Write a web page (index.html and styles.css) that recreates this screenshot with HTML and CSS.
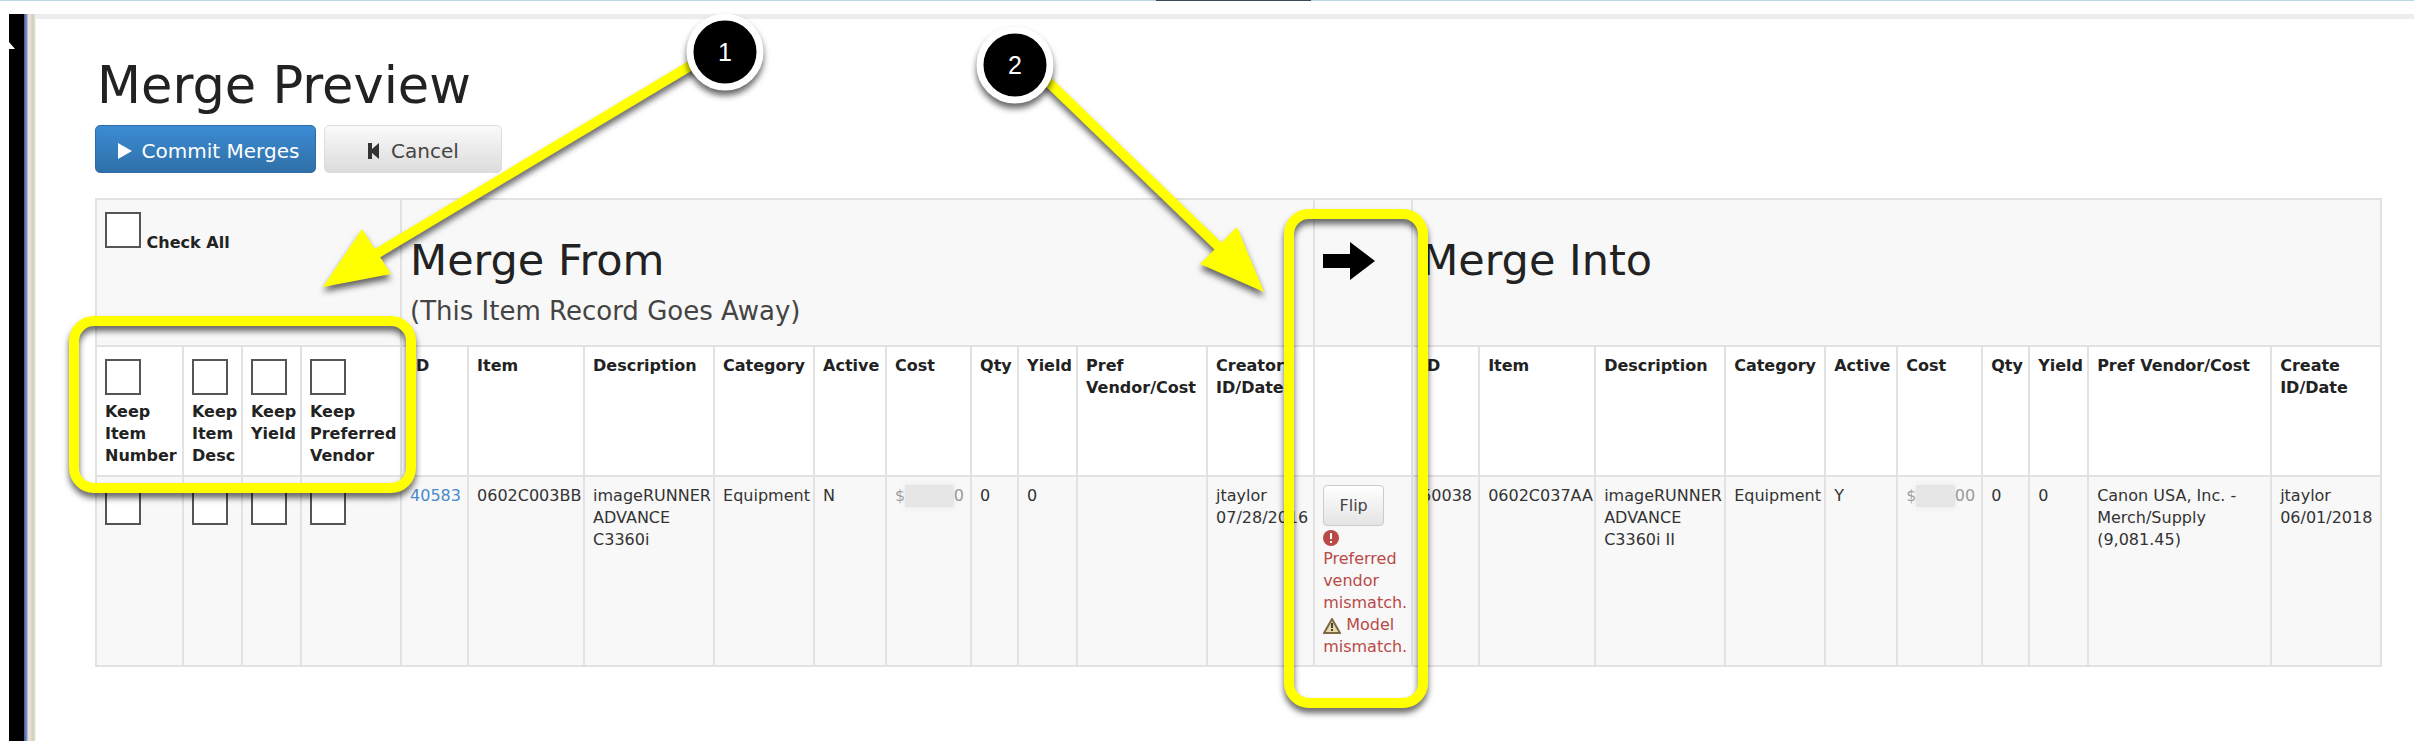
FILE: index.html
```
<!DOCTYPE html>
<html lang="en">
<head>
	<title>Merge Preview</title>
	<meta charset="UTF-8">
	<meta name="viewport" content="width=device-width, initial-scale=1.0">
	<link rel="stylesheet" href="styles.css">
</head>
<body>
	<div class="topbar"><span class="topbar-tab"></span></div>
	<div class="window">
		<div class="rail">
			<svg class="cursor" width="6" height="7" viewBox="0 0 6 7"><path d="M0 0 L6 7 H0 Z" fill="#fff"/></svg>
		</div>
		<div class="rail-edge"></div>
		<main class="content">
			<h1>Merge Preview</h1>
			<div class="actions">
				<button type="button" class="btn btn-primary">
					<svg width="14" height="16" viewBox="0 0 14 16"><path d="M0 0 L14 8 L0 16 Z" fill="#fff"/></svg>
					Commit Merges
				</button>
				<button type="button" class="btn btn-cancel">
					<svg width="14" height="16" viewBox="0 0 14 16"><path d="M1 0 H5 V6 L12 0 V16 L5 10 V16 H1 Z" fill="#333"/></svg>
					Cancel
				</button>
			</div>

			<table class="merge">
				<colgroup>
					<col class="c-number"><col class="c-small"><col class="c-small"><col class="c-cat">
					<col class="c-id"><col class="c-item"><col class="c-desc"><col class="c-cat"><col class="c-active"><col class="c-cost"><col class="c-qty"><col class="c-small"><col class="c-desc"><col class="c-creator">
					<col class="c-arrow">
					<col class="c-id"><col class="c-item"><col class="c-desc"><col class="c-cat"><col class="c-active"><col class="c-cost"><col class="c-qty"><col class="c-small"><col class="c-vendor"><col class="c-created">
				</colgroup>
				<thead>
					<tr class="groups">
						<th colspan="4"><input type="checkbox" id="all"> <label for="all">Check All</label></th>
						<th colspan="10">
							<h2>Merge From</h2>
							<p class="note">(This Item Record Goes Away)</p>
						</th>
						<th>
							<svg class="arrow" width="52" height="38" viewBox="0 0 52 38"><path d="M0 12 H27 V0 L52 19 L27 38 V26 H0 Z" fill="#000"/></svg>
						</th>
						<th colspan="10"><h2>Merge Into</h2></th>
					</tr>
					<tr class="heads">
						<th><input type="checkbox" id="keepNumber"><label for="keepNumber">Keep<br>Item<br>Number</label></th>
						<th><input type="checkbox" id="keepDesc"><label for="keepDesc">Keep<br>Item<br>Desc</label></th>
						<th><input type="checkbox" id="keepYield"><label for="keepYield">Keep<br>Yield</label></th>
						<th><input type="checkbox" id="keepVendor"><label for="keepVendor">Keep<br>Preferred<br>Vendor</label></th>
						<th>ID</th>
						<th>Item</th>
						<th>Description</th>
						<th>Category</th>
						<th>Active</th>
						<th>Cost</th>
						<th>Qty</th>
						<th>Yield</th>
						<th>Pref<br>Vendor/Cost</th>
						<th>Creator<br>ID/Date</th>
						<th></th>
						<th>ID</th>
						<th>Item</th>
						<th>Description</th>
						<th>Category</th>
						<th>Active</th>
						<th>Cost</th>
						<th>Qty</th>
						<th>Yield</th>
						<th>Pref Vendor/Cost</th>
						<th>Create<br>ID/Date</th>
					</tr>
				</thead>
				<tbody>
					<tr>
						<td><input type="checkbox" aria-label="Keep Item Number"></td>
						<td><input type="checkbox" aria-label="Keep Item Desc"></td>
						<td><input type="checkbox" aria-label="Keep Yield"></td>
						<td><input type="checkbox" aria-label="Keep Preferred Vendor"></td>
						<td><a href="#">40583</a></td>
						<td>0602C003BB</td>
						<td>imageRUNNER<br>ADVANCE<br>C3360i</td>
						<td>Equipment</td>
						<td>N</td>
						<td><div class="cost"><span>$</span><span class="hidden-price"></span><span>0</span></div></td>
						<td>0</td>
						<td>0</td>
						<td></td>
						<td>jtaylor<br>07/28/2016</td>
						<td class="problems">
							<button type="button" class="btn-flip">Flip</button>
							<div>
								<svg width="16" height="16" viewBox="0 0 16 16"><circle cx="8" cy="8" r="8" fill="#b94a48"/><path d="M7 3 H9 V9 H7 Z M7 11 H9 V13 H7 Z" fill="#fff"/></svg><br>
								Preferred<br>vendor<br>mismatch.<br>
								<svg width="18" height="16" viewBox="0 0 18 16"><path d="M9 1 L17 15 H1 Z" fill="#e8d9a8" stroke="#7d6a45" stroke-width="2"/><path d="M8 5 H10 V10 H8 Z M8 11 H10 V13 H8 Z" fill="#444"/></svg>
								Model<br>mismatch.
							</div>
						</td>
						<td>50038</td>
						<td>0602C037AA</td>
						<td>imageRUNNER<br>ADVANCE<br>C3360i II</td>
						<td>Equipment</td>
						<td>Y</td>
						<td><div class="cost"><span>$</span><span class="hidden-price"></span><span>00</span></div></td>
						<td>0</td>
						<td>0</td>
						<td>Canon USA, Inc. -<br>Merch/Supply<br>(9,081.45)</td>
						<td>jtaylor<br>06/01/2018</td>
					</tr>
				</tbody>
			</table>
		</main>
	</div>

	<!-- callouts drawn over the page -->
	<svg class="callouts" width="2414" height="752" viewBox="0 0 2414 752">
		<g class="marks">
			<rect x="74" y="321" width="337" height="167" rx="20"/>
			<rect x="1289" y="214" width="134" height="489" rx="20"/>
			<path d="M715 51 L376 254"/>
			<path d="M1040 74 L1220 248"/>
			<path class="head" d="M323 287 L362 229 L391 274 Z"/>
			<path class="head" d="M1264 292 L1237 227 L1200 264 Z"/>
		</g>
		<g class="badges">
			<circle cx="725" cy="52" r="35"/>
			<circle cx="1015" cy="65" r="35"/>
		</g>
		<text x="725" y="61">1</text>
		<text x="1015" y="74">2</text>
	</svg>
</body>
</html>
```
FILE: styles.css
```
* {
	box-sizing: border-box;
}

body {
	margin: 0;
	background-color: #fff;
	color: #333;
	font-family: "DejaVu Sans", Verdana, sans-serif;
	font-size: 16px;
	line-height: 22px;
}

.topbar {
	height: 1px;
	background-color: #b9d7e6;
	margin-bottom: 13px;
}

.topbar-tab {
	display: block;
	width: 155px;
	height: 1px;
	margin-left: 1156px;
	background-color: #3d4a54;
}

.window {
	display: flex;
	margin-left: 9px;
	min-height: 727px;
}

.rail {
	flex: none;
	width: 15px;
	background-color: #000;
}

.cursor {
	display: block;
	margin-top: 28px;
}

.rail-edge {
	flex: none;
	width: 12px;
	background: linear-gradient(to right, #44598c 0, #7d9bd0 3px, #ecdfd6 4px, #ecdfd6 6px, #d5d3bf 8px, #d5d3bf 10px, #eefffb 12px);
}

.content {
	flex: 1;
	min-width: 0;
	border-top: 5px solid #ededed;
	padding: 33px 32px 0 59px;
}

h1 {
	margin: 0 2px;
	font-size: 51px;
	line-height: 68px;
	font-weight: normal;
	color: #222;
}

.actions {
	display: flex;
	gap: 8px;
	margin: 5px 0 25px;
}

.btn {
	display: flex;
	align-items: center;
	justify-content: center;
	gap: 10px;
	height: 48px;
	padding: 4px 0 0;
	border: 1px solid #ddd;
	border-radius: 5px;
	font-family: inherit;
	font-size: 20px;
	color: #444;
}

.btn-primary {
	width: 221px;
	padding-left: 6px;
	border-color: #2d6ca8;
	background: linear-gradient(#3c8bd3, #2f70a8);
	color: #fff;
}

.btn-cancel {
	width: 178px;
	background: linear-gradient(#fafafa, #dcdcdc);
}

.btn-flip {
	display: block;
	width: 61px;
	height: 41px;
	padding: 0;
	border: 1px solid #ccc;
	border-radius: 4px;
	background: linear-gradient(#fff, #e4e4e4);
	font-family: inherit;
	font-size: 16px;
	color: #444;
}

.merge {
	width: 100%;
	table-layout: fixed;
	border-collapse: collapse;
	white-space: nowrap;
}

.merge th,
.merge td {
	padding: 8px 0 8px 8px;
	border: 2px solid #e2e2e2;
	text-align: left;
	vertical-align: top;
}

.merge th {
	color: #222;
}

.groups {
	height: 147px;
	background-color: #f8f8f8;
}

.heads {
	height: 128px;
}

tbody tr {
	height: 190px;
	background-color: #f8f8f8;
}

.c-number { width: 87px; }
.c-small { width: 59px; }
.c-id { width: 67px; }
.c-item { width: 116px; }
.c-desc { width: 130px; }
.c-cat { width: 100px; }
.c-active { width: 72px; }
.c-cost { width: 85px; }
.c-qty { width: 47px; }
.c-creator { width: 107px; }
.c-arrow { width: 98px; }
.c-vendor { width: 183px; }
.c-created { width: 110px; }

.merge input {
	appearance: none;
	width: 36px;
	height: 36px;
	margin: 4px 0 0;
	border: 2px solid #555;
	background-color: #fff;
	vertical-align: baseline;
}

.heads input {
	display: block;
	margin-bottom: 6px;
}

h2 {
	margin: 24px 0 0;
	font-size: 43px;
	line-height: 56px;
	font-weight: normal;
}

.note {
	margin: 8px 0 0;
	font-size: 26px;
	line-height: 30px;
	font-weight: normal;
	color: #444;
}

.arrow {
	display: block;
	margin-top: 34px;
}

a {
	color: #4a8acb;
	text-decoration: none;
}

.cost {
	display: flex;
	padding-right: 6px;
	color: #999;
}

.hidden-price {
	flex: 1;
	background-color: #e6e6e6;
	box-shadow: 0 0 6px #e6e6e6;
}

.problems {
	color: #b94a48;
}

/* the alert text runs to the very bottom of the row */
.merge .problems {
	padding-bottom: 0;
}

.problems svg {
	vertical-align: middle;
}

.callouts {
	position: absolute;
	top: 0;
	left: 0;
	pointer-events: none;
}

.marks {
	fill: none;
	stroke: #ff0;
	stroke-width: 10;
	filter: drop-shadow(0 5px 3px rgba(0, 0, 0, 0.6));
}

.head {
	fill: #ff0;
	stroke: none;
}

.badges {
	fill: #000;
	stroke: #fff;
	stroke-width: 7;
	filter: drop-shadow(0 5px 3px rgba(0, 0, 0, 0.6));
}

.callouts text {
	fill: #fff;
	font-family: "Liberation Sans", Arial, sans-serif;
	font-size: 25px;
	text-anchor: middle;
}
```
